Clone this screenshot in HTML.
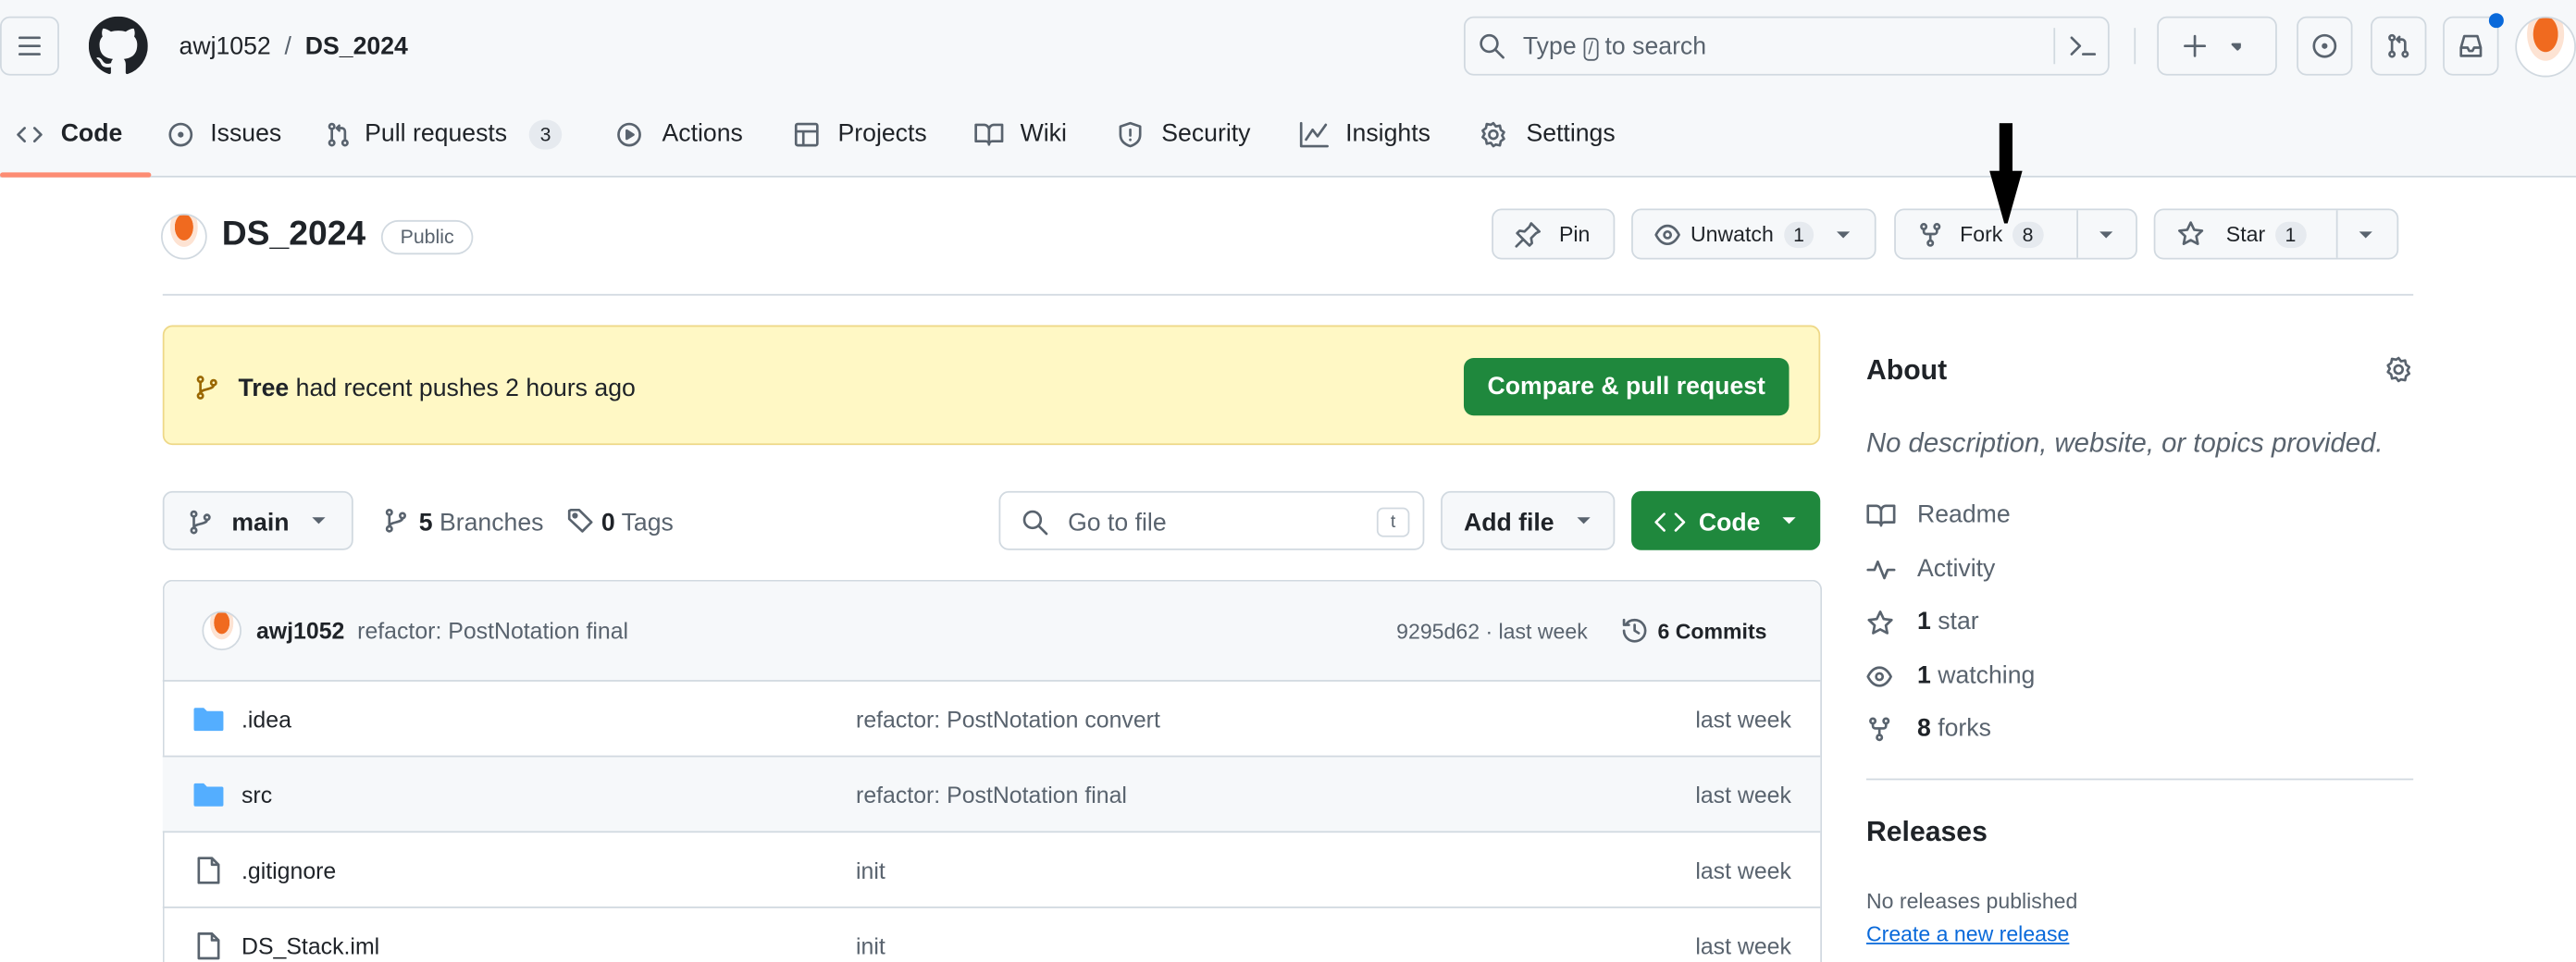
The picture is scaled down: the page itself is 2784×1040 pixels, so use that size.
<!DOCTYPE html>
<html><head><meta charset="utf-8"><style>
*{box-sizing:border-box;margin:0;padding:0}
html,body{width:2784px;height:1040px;overflow:hidden;background:#fff}
#w{width:1568px;height:586px;transform:scale(1.7755);transform-origin:0 0;position:relative;font-family:"Liberation Sans",sans-serif;color:#1f2328;font-size:14px}
.a{position:absolute}
.btn{position:absolute;border:1px solid #d1d9e0;border-radius:6px;background:#f6f8fa}
.t{position:absolute;white-space:nowrap}
svg{position:absolute;fill:none;stroke:#59636e;stroke-width:1.5;stroke-linecap:round;stroke-linejoin:round}
.cnt{display:inline-block;background:#e6eaef;border-radius:10px;padding:1px 6px;font-size:12px;margin-left:6px}
.row{position:absolute;left:99px;width:1009px;height:46px;border-top:1px solid #d1d9e0}
.row .t{top:15px;font-size:14px}
.g{color:#59636e}
.av{background:radial-gradient(ellipse at 50% 28%,#f06a1f 0 30%,#fde3d3 31% 45%,#fff 46%)}
</style></head><body><div id="w">
<div class="a" style="left:0;top:0;width:1568px;height:108px;background:#f6f8fa;border-bottom:1px solid #d1d9e0"></div>
<div class="btn" style="left:0;top:10px;width:36px;height:36px"></div>
<svg style="left:10px;top:20px" width="16" height="16"><path d="M2 3h12M2 8h12M2 13h12"/></svg>
<svg style="left:54px;top:10px;fill:#1f2328;stroke:none" width="36" height="36" viewBox="0 0 16 16"><path d="M8 0C3.58 0 0 3.58 0 8c0 3.54 2.29 6.530 5.47 7.590.4.07.55-.17.55-.38 0-.19-.01-.82-.01-1.49-2.01.37-2.53-.49-2.69-.94-.09-.23-.48-.94-.82-1.13-.28-.15-.68-.52-.01-.53.63-.01 1.08.58 1.23.82.72 1.21 1.87.87 2.33.66.07-.52.28-.87.51-1.07-1.780-.2-3.64-.89-3.64-3.95 0-.87.31-1.59.82-2.15-.08-.2-.36-1.02.08-2.12 0 0 .67-.21 2.2.82.64-.18 1.32-.27 2-.27.68 0 1.36.09 2 .27 1.53-1.04 2.2-.82 2.2-.82.44 1.1.16 1.92.08 2.12.51.56.82 1.27.82 2.15 0 3.07-1.87 3.75-3.65 3.95.29.25.54.73.54 1.48 0 1.07-.01 1.93-.01 2.2 0 .21.15.46.55.38A8.013 8.013 0 0016 8c0-4.42-3.58-8-8-8z"/></svg>
<div class="t" style="left:109px;top:20px;font-size:15px">awj1052 <span class="g">&nbsp;/&nbsp;</span> <b style="font-weight:600">DS_2024</b></div>
<div class="btn" style="left:891px;top:10px;width:393px;height:36px;background:#f6f8fa"></div>
<svg style="left:900px;top:20px" width="16" height="16"><circle cx="6.5" cy="6.5" r="5"/><path d="M10.5 10.5L15 15"/></svg>
<div class="t g" style="left:927px;top:20px;font-size:15px">Type <span style="border:1px solid #59636e;border-radius:3px;padding:0 2px;font-size:11px">/</span> to search</div>
<div class="a" style="left:1250px;top:17px;width:1px;height:22px;background:#d1d9e0"></div>
<svg style="left:1259px;top:20px" width="18" height="16"><path d="M2 3l5 5-5 5M9 13h7"/></svg>
<div class="a" style="left:1299px;top:17px;width:1px;height:22px;background:#d1d9e0"></div>
<div class="btn" style="left:1313px;top:10px;width:73px;height:36px"></div>
<svg style="left:1328px;top:20px" width="36" height="16"><path d="M8 2v12M2 8h12"/><path d="M31 7l3 3 3-3z" fill="#59636e"/></svg>
<div class="btn" style="left:1398px;top:10px;width:34px;height:36px"></div>
<svg style="left:1407px;top:20px" width="16" height="16"><circle cx="8" cy="8" r="6.5"/><circle cx="8" cy="8" r="1" fill="#59636e"/></svg>
<div class="btn" style="left:1443px;top:10px;width:34px;height:36px"></div>
<svg style="left:1452px;top:20px" width="16" height="16"><circle cx="4" cy="3" r="1.5"/><circle cx="4" cy="13" r="1.5"/><circle cx="12" cy="13" r="1.5"/><path d="M4 4.5v7M12 11.5V6a2 2 0 00-2-2H7M8.5 2.5L7 4l1.5 1.5"/></svg>
<div class="btn" style="left:1487px;top:10px;width:34px;height:36px"></div>
<svg style="left:1496px;top:20px" width="16" height="16"><path d="M2 9l2-7h8l2 7v5H2zM2 9h4l1 2h2l1-2h4"/></svg>
<div class="a" style="left:1515px;top:8px;width:9px;height:9px;border-radius:50%;background:#0969da"></div>
<div class="a av" style="left:1531px;top:10px;width:37px;height:37px;border-radius:50%;border:1px solid #d1d9e0"></div>
<!-- nav -->
<svg style="left:10px;top:74px" width="16" height="16"><path d="M5 4L1 8l4 4M11 4l4 4-4 4"/></svg>
<div class="t" style="left:37px;top:73px;font-size:15px;font-weight:600">Code</div>
<div class="a" style="left:0;top:105px;width:92px;height:3px;background:#fd8c73;border-radius:2px"></div>
<svg style="left:102px;top:74px" width="16" height="16"><circle cx="8" cy="8" r="6.5"/><circle cx="8" cy="8" r="1" fill="#59636e"/></svg>
<div class="t" style="left:128px;top:73px;font-size:15px">Issues</div>
<svg style="left:198px;top:74px" width="16" height="16"><circle cx="4" cy="3" r="1.5"/><circle cx="4" cy="13" r="1.5"/><circle cx="12" cy="13" r="1.5"/><path d="M4 4.5v7M12 11.5V6a2 2 0 00-2-2H7M8.5 2.5L7 4l1.5 1.5"/></svg>
<div class="t" style="left:222px;top:73px;font-size:15px">Pull requests<span class="cnt" style="margin-left:13px;padding:2px 7px">3</span></div>
<svg style="left:375px;top:74px" width="16" height="16"><circle cx="8" cy="8" r="6.5"/><path d="M6.5 5.5v5l4-2.5z" fill="#59636e"/></svg>
<div class="t" style="left:403px;top:73px;font-size:15px">Actions</div>
<svg style="left:483px;top:74px" width="16" height="16"><rect x="1.5" y="1.5" width="13" height="13" rx="1"/><path d="M1.5 6h13M6 6v8.5"/></svg>
<div class="t" style="left:510px;top:73px;font-size:15px">Projects</div>
<svg style="left:593px;top:74px" width="18" height="16"><path d="M1 2h5a3 3 0 013 3v9a2 2 0 00-2-2H1zM17 2h-5a3 3 0 00-3 3v9a2 2 0 012-2h6z"/></svg>
<div class="t" style="left:621px;top:73px;font-size:15px">Wiki</div>
<svg style="left:680px;top:74px" width="16" height="16"><path d="M8 1l6 2v5c0 4-3 6-6 7-3-1-6-3-6-7V3z M8 5v3.5M8 11v.2"/></svg>
<div class="t" style="left:707px;top:73px;font-size:15px">Security</div>
<svg style="left:791px;top:74px" width="18" height="16"><path d="M1 1v14h16M4 11l4-6 3 4 5-7"/></svg>
<div class="t" style="left:819px;top:73px;font-size:15px">Insights</div>
<svg style="left:901px;top:74px" width="16" height="16"><circle cx="8" cy="8" r="2.5"/><path d="M8 1l1.5 2 2.5-.5.5 2.5 2 1.5-1.2 2 1.2 2-2 1.5-.5 2.5-2.5-.5L8 15l-1.5-2-2.5.5-.5-2.5-2-1.5 1.2-2-1.2-2 2-1.5.5-2.5 2.5.5z"/></svg>
<div class="t" style="left:929px;top:73px;font-size:15px">Settings</div>
<!-- repo header -->
<div class="a av" style="left:98px;top:130px;width:28px;height:28px;border-radius:50%;border:1px solid #d1d9e0"></div>
<div class="t" style="left:135px;top:131px;font-size:21px;font-weight:600">DS_2024</div>
<div class="a" style="left:232px;top:134px;width:56px;height:21px;border:1px solid #d1d9e0;border-radius:11px;font-size:12px;color:#59636e;text-align:center;line-height:19px">Public</div>
<div class="btn" style="left:908px;top:127px;width:75px;height:31px"></div>
<svg style="left:922px;top:135px" width="16" height="16"><path d="M10 1l5 5-2 1-3 3 .5 3L9 14.5 1.5 7 3 5.5l3 .5 3-3zM5 11l-4 4"/></svg>
<div class="t" style="left:949px;top:135px;font-size:13px">Pin</div>
<div class="btn" style="left:993px;top:127px;width:149px;height:31px"></div>
<svg style="left:1007px;top:135px" width="16" height="16"><path d="M1 8c2-4 4.5-5.5 7-5.5S13 4 15 8c-2 4-4.5 5.5-7 5.5S3 12 1 8z"/><circle cx="8" cy="8" r="2"/></svg>
<div class="t" style="left:1029px;top:135px;font-size:13px">Unwatch<span class="cnt">1</span></div>
<svg style="left:1117px;top:139px;fill:#59636e;stroke:none" width="12" height="8"><path d="M1 2h8L5 6z"/></svg>
<div class="btn" style="left:1153px;top:127px;width:148px;height:31px"></div>
<div class="a" style="left:1264px;top:128px;width:1px;height:29px;background:#d1d9e0"></div>
<svg style="left:1167px;top:135px" width="16" height="16"><circle cx="4" cy="3" r="1.5"/><circle cx="12" cy="3" r="1.5"/><circle cx="8" cy="13" r="1.5"/><path d="M4 4.5V6a1.5 1.5 0 001.5 1.5h5A1.5 1.5 0 0012 6V4.5M8 7.5v4"/></svg>
<div class="t" style="left:1193px;top:135px;font-size:13px">Fork<span class="cnt">8</span></div>
<svg style="left:1277px;top:139px;fill:#59636e;stroke:none" width="12" height="8"><path d="M1 2h8L5 6z"/></svg>
<div class="btn" style="left:1311px;top:127px;width:149px;height:31px"></div>
<div class="a" style="left:1422px;top:128px;width:1px;height:29px;background:#d1d9e0"></div>
<svg style="left:1325px;top:134px" width="17" height="17"><path d="M8.5 1.5l2.1 4.4 4.8.6-3.5 3.3.9 4.7-4.3-2.3-4.3 2.3.9-4.7L1.6 6.5l4.8-.6z"/></svg>
<div class="t" style="left:1355px;top:135px;font-size:13px">Star<span class="cnt">1</span></div>
<svg style="left:1435px;top:139px;fill:#59636e;stroke:none" width="12" height="8"><path d="M1 2h8L5 6z"/></svg>
<div class="a" style="left:99px;top:179px;width:1370px;height:1px;background:#d1d9e0"></div>
<!-- arrow -->
<div class="a" style="left:1217px;top:75px;width:8px;height:34px;background:#000"></div>
<svg style="left:1211px;top:104px;fill:#000;stroke:none" width="20" height="32"><path d="M0 0h20L11 32h-2z"/></svg>
<!-- banner -->
<div class="a" style="left:99px;top:198px;width:1009px;height:73px;background:#fff8c5;border:1px solid #eed888;border-radius:6px"></div>
<svg style="left:118px;top:228px;stroke:#9a6700" width="16" height="16"><circle cx="4" cy="3" r="1.5"/><circle cx="12" cy="5" r="1.5"/><circle cx="4" cy="13" r="1.5"/><path d="M4 4.5v7M12 6.5c0 3-8 2-8 5"/></svg>
<div class="t" style="left:145px;top:228px;font-size:15px"><b style="font-weight:600">Tree</b> had recent pushes 2 hours ago</div>
<div class="a" style="left:891px;top:218px;width:198px;height:35px;background:#1f883d;border-radius:6px;color:#fff;font-size:15px;font-weight:600;text-align:center;line-height:35px">Compare &amp; pull request</div>
<!-- toolbar -->
<div class="btn" style="left:99px;top:299px;width:116px;height:36px"></div>
<svg style="left:114px;top:310px" width="16" height="16"><circle cx="4" cy="3" r="1.5"/><circle cx="12" cy="5" r="1.5"/><circle cx="4" cy="13" r="1.5"/><path d="M4 4.5v7M12 6.5c0 3-8 2-8 5"/></svg>
<div class="t" style="left:141px;top:310px;font-size:15px;font-weight:600">main</div>
<svg style="left:189px;top:314px;fill:#59636e;stroke:none" width="12" height="8"><path d="M1 1h8L5 5z"/></svg>
<svg style="left:233px;top:309px" width="16" height="16"><circle cx="4" cy="3" r="1.5"/><circle cx="12" cy="5" r="1.5"/><circle cx="4" cy="13" r="1.5"/><path d="M4 4.5v7M12 6.5c0 3-8 2-8 5"/></svg>
<div class="t g" style="left:255px;top:310px;font-size:15px"><b style="color:#1f2328;font-weight:600">5</b> Branches</div>
<svg style="left:345px;top:309px" width="18" height="16"><path d="M1.5 2v5l8 7.5 5.5-5.5L7.5 1.5h-5z"/><circle cx="5" cy="5" r="1" fill="#59636e"/></svg>
<div class="t g" style="left:366px;top:310px;font-size:15px"><b style="color:#1f2328;font-weight:600">0</b> Tags</div>
<div class="a" style="left:608px;top:299px;width:259px;height:36px;border:1px solid #d1d9e0;border-radius:6px"></div>
<svg style="left:622px;top:310px" width="16" height="16"><circle cx="6.5" cy="6.5" r="5"/><path d="M10.5 10.5L15 15"/></svg>
<div class="t g" style="left:650px;top:310px;font-size:15px">Go to file</div>
<div class="a" style="left:838px;top:309px;width:20px;height:18px;border:1px solid #d1d9e0;border-radius:4px;font-size:11px;text-align:center;line-height:16px;color:#59636e">t</div>
<div class="btn" style="left:877px;top:299px;width:106px;height:36px"></div>
<div class="t" style="left:891px;top:310px;font-size:15px;font-weight:600">Add file</div>
<svg style="left:959px;top:314px;fill:#59636e;stroke:none" width="12" height="8"><path d="M1 1h8L5 5z"/></svg>
<div class="a" style="left:993px;top:299px;width:115px;height:36px;background:#1f883d;border-radius:6px"></div>
<svg style="left:1007px;top:310px;stroke:#fff" width="20" height="16"><path d="M6 3L1 8l5 5M13 3l5 5-5 5"/></svg>
<div class="t" style="left:1034px;top:310px;font-size:15px;font-weight:600;color:#fff">Code</div>
<svg style="left:1084px;top:314px;fill:#fff;stroke:none" width="12" height="8"><path d="M1 1h8L5 5z"/></svg>
<!-- table -->
<div class="a" style="left:99px;top:353px;width:1010px;height:240px;border:1px solid #d1d9e0;border-radius:6px 6px 0 0;border-bottom:none"></div>
<div class="a" style="left:100px;top:354px;width:1008px;height:60px;background:#f6f8fa;border-radius:6px 6px 0 0"></div>
<div class="a av" style="left:123px;top:372px;width:24px;height:24px;border-radius:50%;border:1px solid #d1d9e0"></div>
<div class="t" style="left:156px;top:376px;font-size:14px"><b style="font-weight:600">awj1052</b> <span class="g">&nbsp;refactor: PostNotation final</span></div>
<div class="t g" style="left:850px;top:377px;font-size:13px">9295d62 · last week</div>
<svg style="left:986px;top:375px" width="18" height="18"><path d="M2.5 9a6.5 6.5 0 106.5-6.5A6.5 6.5 0 003.5 5.5M2.5 2.5v3h3M9 5.5V9l2.5 1.5"/></svg>
<div class="t" style="left:1009px;top:377px;font-size:13px;font-weight:600">6 Commits</div>
<div class="row" style="top:414px"><svg style="left:19px;top:15px;fill:#54aeff;stroke:none" width="18" height="16"><path d="M0 2a1 1 0 011-1h5l2 2h9a1 1 0 011 1v10a1 1 0 01-1 1H1a1 1 0 01-1-1z"/></svg><div class="t" style="left:48px">.idea</div><div class="t g" style="left:422px">refactor: PostNotation convert</div><div class="t g" style="left:933px">last week</div></div>
<div class="row" style="top:460px;background:#f6f8fa"><svg style="left:19px;top:15px;fill:#54aeff;stroke:none" width="18" height="16"><path d="M0 2a1 1 0 011-1h5l2 2h9a1 1 0 011 1v10a1 1 0 01-1 1H1a1 1 0 01-1-1z"/></svg><div class="t" style="left:48px">src</div><div class="t g" style="left:422px">refactor: PostNotation final</div><div class="t g" style="left:933px">last week</div></div>
<div class="row" style="top:506px"><svg style="left:20px;top:14px" width="16" height="18"><path d="M2 1.5h8l4 4v11H2zM10 1.5v4h4"/></svg><div class="t" style="left:48px">.gitignore</div><div class="t g" style="left:422px">init</div><div class="t g" style="left:933px">last week</div></div>
<div class="row" style="top:552px"><svg style="left:20px;top:14px" width="16" height="18"><path d="M2 1.5h8l4 4v11H2zM10 1.5v4h4"/></svg><div class="t" style="left:48px">DS_Stack.iml</div><div class="t g" style="left:422px">init</div><div class="t g" style="left:933px">last week</div></div>
<!-- sidebar -->
<div class="t" style="left:1136px;top:216px;font-size:17px;font-weight:600">About</div>
<svg style="left:1452px;top:217px" width="16" height="16"><circle cx="8" cy="8" r="2.5"/><path d="M8 1l1.5 2 2.5-.5.5 2.5 2 1.5-1.2 2 1.2 2-2 1.5-.5 2.5-2.5-.5L8 15l-1.5-2-2.5.5-.5-2.5-2-1.5 1.2-2-1.2-2 2-1.5.5-2.5 2.5.5z"/></svg>
<div class="t g" style="left:1136px;top:261px;font-size:16.5px;font-style:italic">No description, website, or topics provided.</div>
<svg style="left:1136px;top:306px" width="18" height="16"><path d="M1 2h5a3 3 0 013 3v9a2 2 0 00-2-2H1zM17 2h-5a3 3 0 00-3 3v9a2 2 0 012-2h6z"/></svg>
<div class="t g" style="left:1167px;top:305px;font-size:15px">Readme</div>
<svg style="left:1136px;top:339px" width="18" height="16"><path d="M1 8h4l2-5 4 10 2-5h4"/></svg>
<div class="t g" style="left:1167px;top:338px;font-size:15px">Activity</div>
<svg style="left:1136px;top:371px" width="17" height="17"><path d="M8.5 1.5l2.1 4.4 4.8.6-3.5 3.3.9 4.7-4.3-2.3-4.3 2.3.9-4.7L1.6 6.5l4.8-.6z"/></svg>
<div class="t g" style="left:1167px;top:370px;font-size:15px"><b style="color:#1f2328;font-weight:600">1</b> star</div>
<svg style="left:1136px;top:404px" width="17" height="16"><path d="M1 8c2-4 4.5-5.5 7-5.5S13 4 15 8c-2 4-4.5 5.5-7 5.5S3 12 1 8z"/><circle cx="8" cy="8" r="2"/></svg>
<div class="t g" style="left:1167px;top:403px;font-size:15px"><b style="color:#1f2328;font-weight:600">1</b> watching</div>
<svg style="left:1136px;top:436px" width="16" height="16"><circle cx="4" cy="3" r="1.5"/><circle cx="12" cy="3" r="1.5"/><circle cx="8" cy="13" r="1.5"/><path d="M4 4.5V6a1.5 1.5 0 001.5 1.5h5A1.5 1.5 0 0012 6V4.5M8 7.5v4"/></svg>
<div class="t g" style="left:1167px;top:435px;font-size:15px"><b style="color:#1f2328;font-weight:600">8</b> forks</div>
<div class="a" style="left:1136px;top:474px;width:333px;height:1px;background:#d1d9e0"></div>
<div class="t" style="left:1136px;top:497px;font-size:17px;font-weight:600">Releases</div>
<div class="t g" style="left:1136px;top:541px;font-size:13px">No releases published</div>
<div class="t" style="left:1136px;top:561px;font-size:13px;color:#0969da;text-decoration:underline">Create a new release</div>
</div></body></html>
